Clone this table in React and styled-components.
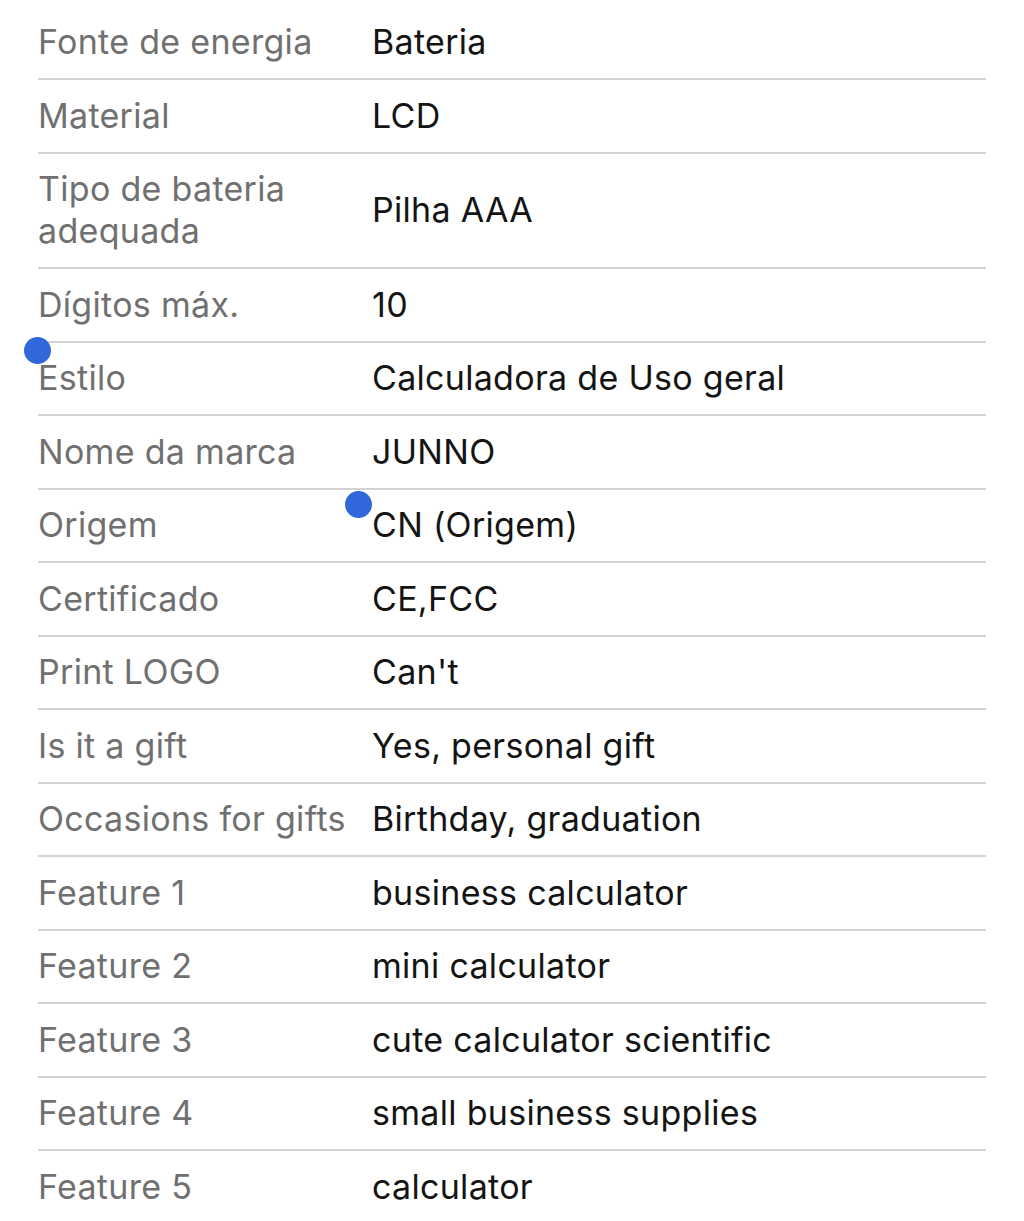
import React from "react";
import styled, { createGlobalStyle } from "styled-components";

const GlobalStyle = createGlobalStyle`
  body {
    margin: 0;
    background: #ffffff;
    font-family: Inter, "Noto Sans", sans-serif;
  }
`;

const Page = styled.div`
  position: relative;
  padding: 6.5px 38px 0 38px;
  width: 1024px;
  height: 1221px;
  box-sizing: border-box;
  overflow: hidden;
  background: #ffffff;
`;

const Table = styled.div`
  display: flex;
  flex-direction: column;
`;

const Row = styled.div`
  display: grid;
  grid-template-columns: 334px 1fr;
  align-items: center;
  padding: 14.75px 0;
  border-bottom: 2px solid #d3d3d3;
  &:last-child {
    border-bottom: none;
  }
`;

const Label = styled.div`
  font-size: 34px;
  line-height: 42px;
  color: #707070;
  letter-spacing: 0.3px;
  white-space: nowrap;
`;

const Value = styled.div`
  font-size: 34px;
  line-height: 42px;
  color: #141414;
  letter-spacing: 0.3px;
`;

const Handle = styled.span`
  position: absolute;
  width: 27px;
  height: 27px;
  border-radius: 50%;
  background: #3068db;
  left: ${(p) => p.x - 13.5}px;
  top: ${(p) => p.y - 13.5}px;
`;

const specs = [
  ["Fonte de energia", "Bateria"],
  ["Material", "LCD"],
  [["Tipo de bateria", "adequada"], "Pilha AAA"],
  ["Dígitos máx.", "10"],
  ["Estilo", "Calculadora de Uso geral"],
  ["Nome da marca", "JUNNO"],
  ["Origem", "CN (Origem)"],
  ["Certificado", "CE,FCC"],
  ["Print LOGO", "Can't"],
  ["Is it a gift", "Yes, personal gift"],
  ["Occasions for gifts", "Birthday, graduation"],
  ["Feature 1", "business calculator"],
  ["Feature 2", "mini calculator"],
  ["Feature 3", "cute calculator scientific"],
  ["Feature 4", "small business supplies"],
  ["Feature 5", "calculator"],
];

export default function App() {
  return (
    <Page>
      <GlobalStyle />
      <Table>
        {specs.map(([label, value], i) => (
          <Row key={i}>
            <Label>
              {Array.isArray(label)
                ? label.map((l, j) => <div key={j}>{l}</div>)
                : label}
            </Label>
            <Value>{value}</Value>
          </Row>
        ))}
      </Table>
      <Handle x={37} y={350} />
      <Handle x={358} y={504} />
    </Page>
  );
}
